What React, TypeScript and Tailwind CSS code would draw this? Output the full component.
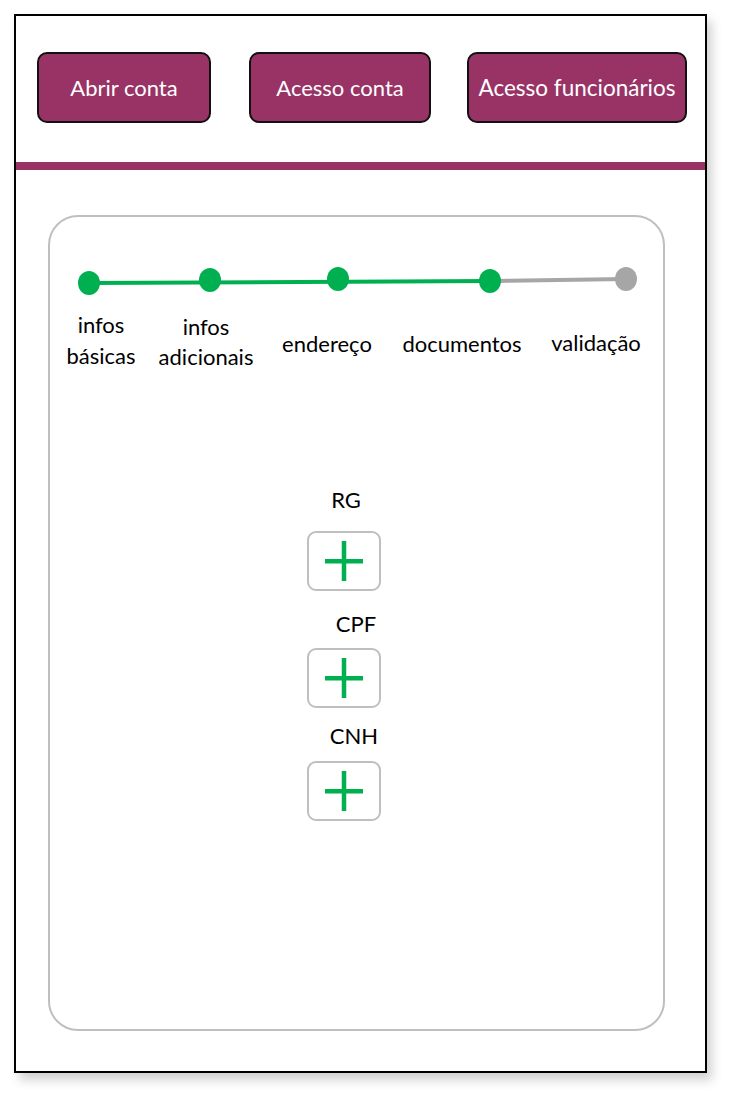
import React from "react";

const font = { fontFamily: "Lato, 'Open Sans', sans-serif" };

function Plus() {
  return (
    <div className="w-[74px] h-[60px] border-2 border-[#bfbfbf] rounded-[9px] flex items-center justify-center bg-white">
      <svg width="38" height="40" viewBox="0 0 38 40">
        <rect x="0" y="18" width="38" height="4.5" fill="#00b050" />
        <rect x="16.75" y="0" width="4.5" height="40" fill="#00b050" />
      </svg>
    </div>
  );
}

export default function App() {
  const dots = [
    { x: 41, y: 68, c: "#00b050" },
    { x: 162, y: 65, c: "#00b050" },
    { x: 290, y: 64, c: "#00b050" },
    { x: 442, y: 66, c: "#00b050" },
    { x: 578, y: 64, c: "#a6a6a6" },
  ];
  return (
    <div className="w-[729px] h-[1095px] bg-white pl-[14px] pt-[14px]" style={font}>
      <div className="w-[693px] h-[1059px] border-2 border-black bg-white shadow-[5px_7px_10px_rgba(0,0,0,0.18)] flex flex-col">
        <div className="flex pl-[21px] pt-[36px] h-[146px]">
          <button className="w-[174px] h-[71px] rounded-[10px] border-2 border-[#111] bg-[#993366] text-white text-[22px] leading-[28px]">
            Abrir conta
          </button>
          <button className="ml-[38px] w-[182px] h-[71px] rounded-[10px] border-2 border-[#111] bg-[#993366] text-white text-[22px] leading-[28px]">
            Acesso conta
          </button>
          <button className="ml-[36px] w-[220px] h-[71px] rounded-[10px] border-2 border-[#111] bg-[#993366] text-white text-[22.5px] leading-[28px] whitespace-nowrap">
            Acesso funcionários
          </button>
        </div>
        <div className="h-[8px] bg-[#993366]" />
        <div className="ml-[32px] mt-[45px] w-[617px] h-[816px] border-2 border-[#bfbfbf] rounded-[30px] relative">
          <div className="relative h-[150px] -m-[2px]">
            <svg className="absolute left-0 top-0" width="617" height="120">
              <line x1="41" y1="68" x2="442" y2="66" stroke="#00b050" strokeWidth="4" />
              <line x1="442" y1="66" x2="578" y2="64" stroke="#a6a6a6" strokeWidth="4" />
              {dots.map((d, i) => (
                <ellipse key={i} cx={d.x} cy={d.y} rx="11" ry="12" fill={d.c} />
              ))}
            </svg>
            <div className="absolute left-[3px] top-[94px] w-[100px] text-center text-[22px] leading-[31px] text-black">
              infos<br />básicas
            </div>
            <div className="absolute left-[88px] top-[97px] w-[140px] text-center text-[22px] leading-[30px] text-black">
              infos<br />adicionais
            </div>
            <div className="absolute left-[209px] top-[116px] w-[140px] text-center text-[22px] leading-[26px] text-black">
              endereço
            </div>
            <div className="absolute left-[334px] top-[116px] w-[160px] text-center text-[22px] leading-[26px] text-black">
              documentos
            </div>
            <div className="absolute left-[478px] top-[115px] w-[140px] text-center text-[22px] leading-[26px] text-black">
              validação
            </div>
          </div>
          <div className="flex flex-col ml-[257px] mt-[125px] text-[22px] leading-[24px] text-black">
            <div className="ml-[2px] w-[74px] text-center">RG</div>
            <div className="mt-[19px]"><Plus /></div>
            <div className="ml-[12px] w-[74px] text-center mt-[21px]">CPF</div>
            <div className="mt-[12px]"><Plus /></div>
            <div className="ml-[10px] w-[74px] text-center mt-[16px]">CNH</div>
            <div className="mt-[13px]"><Plus /></div>
          </div>
        </div>
      </div>
    </div>
  );
}
